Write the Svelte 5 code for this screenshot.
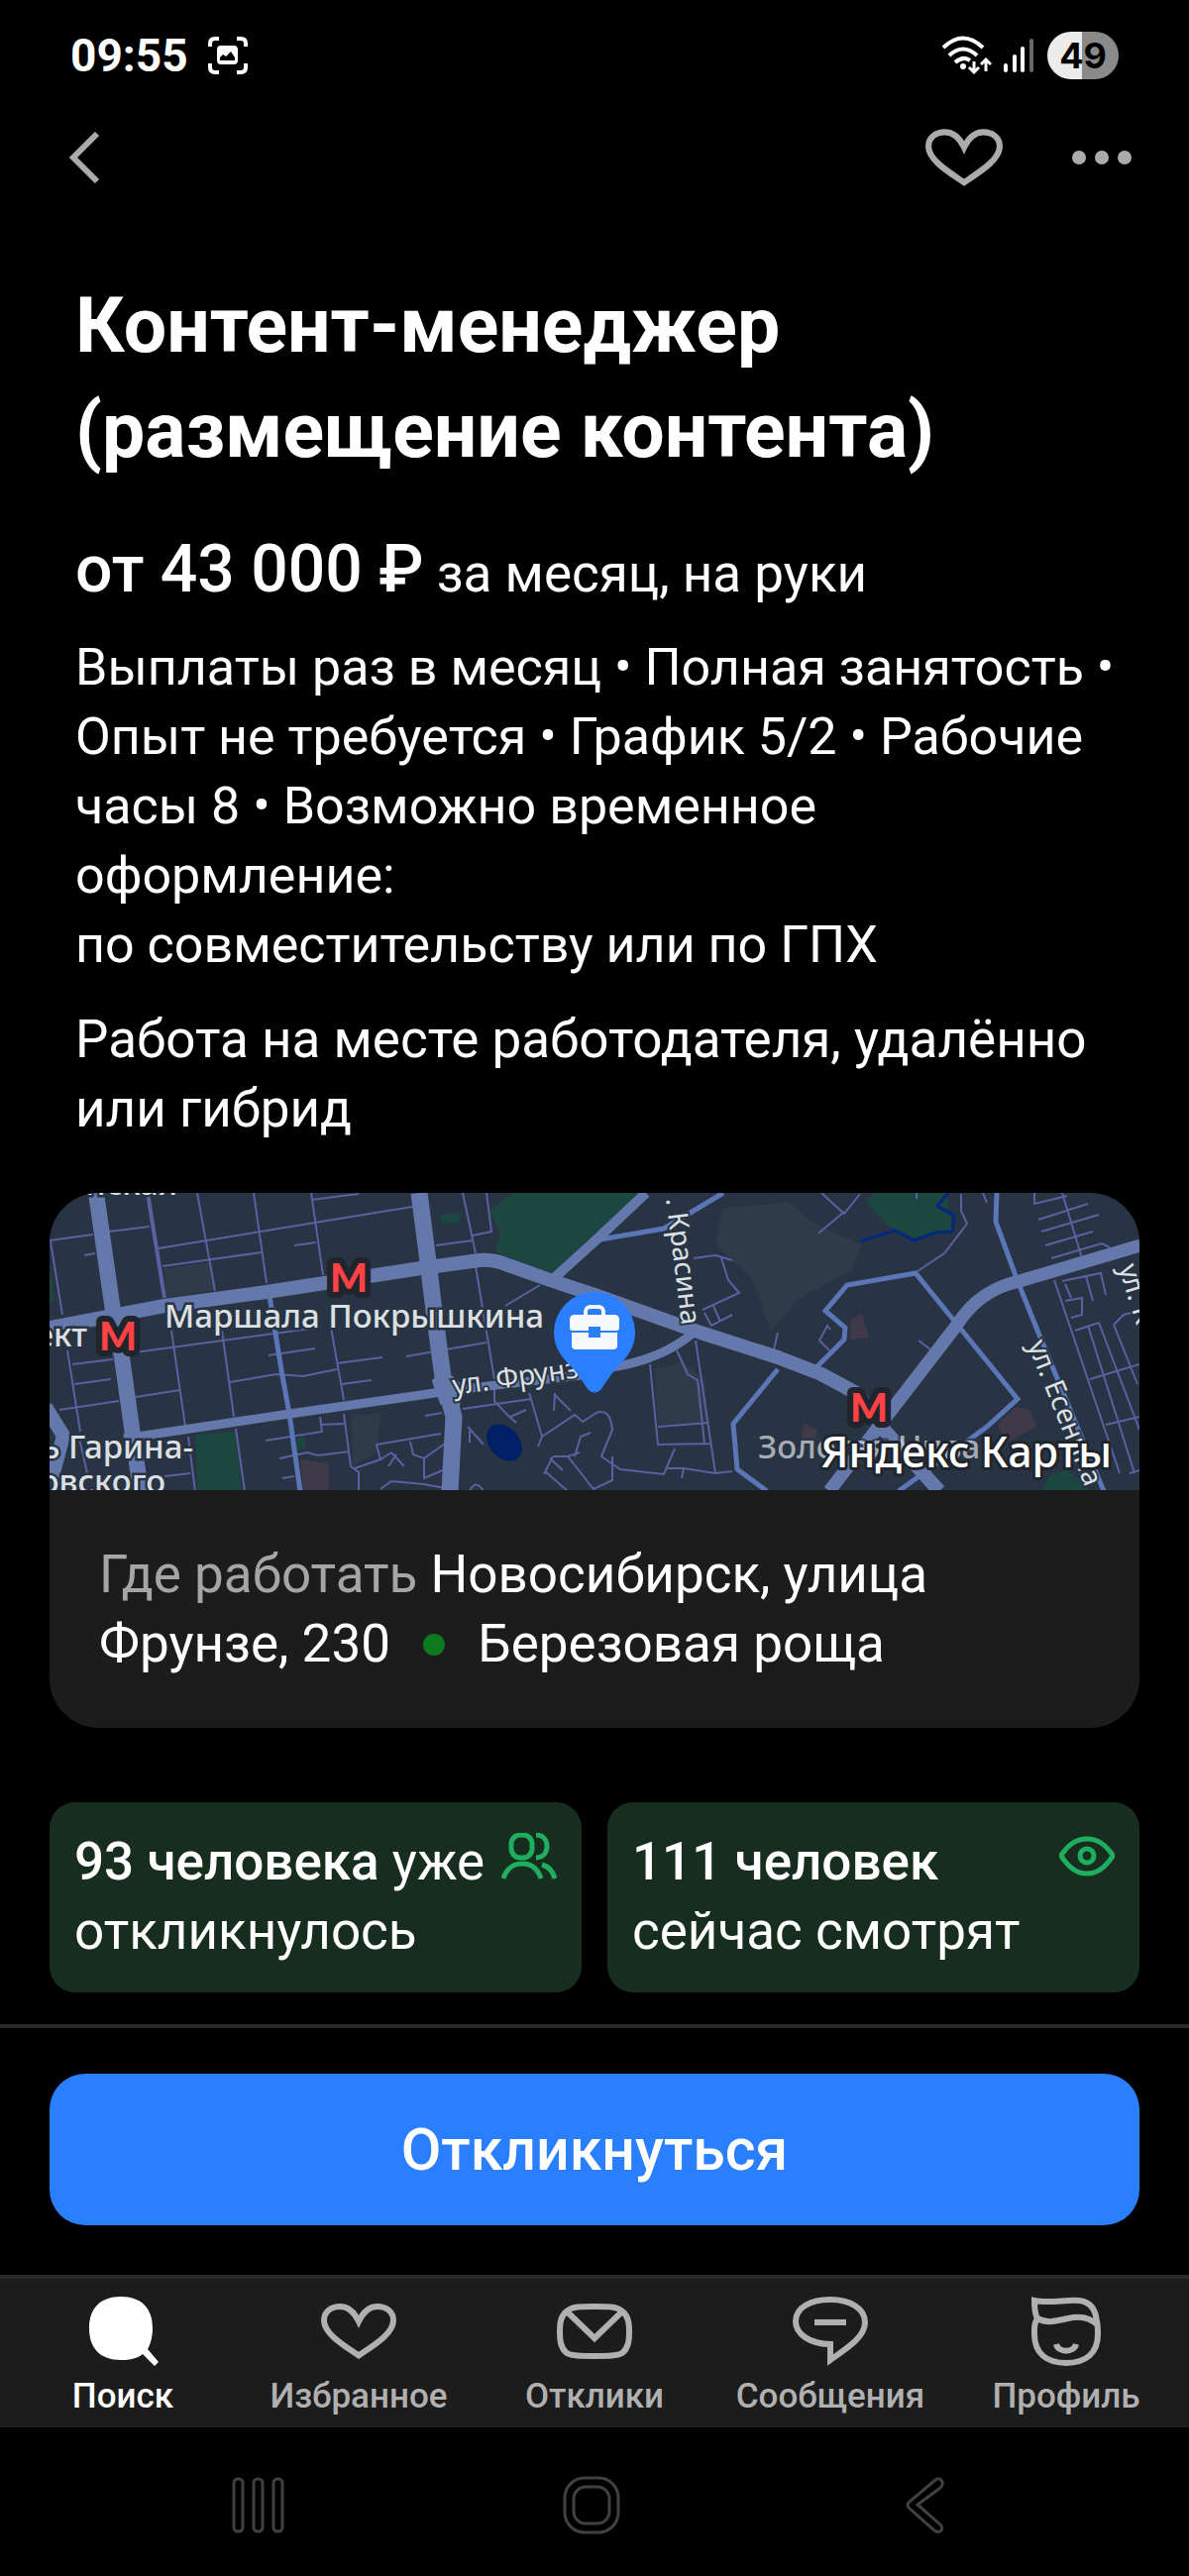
<script lang="ts">
	type Tab = { id: string; label: string };

	const tabs: Tab[] = [
		{ id: 'search', label: 'Поиск' },
		{ id: 'favorites', label: 'Избранное' },
		{ id: 'responses', label: 'Отклики' },
		{ id: 'messages', label: 'Сообщения' },
		{ id: 'profile', label: 'Профиль' }
	];

	const metro = [
		{ x: 302, y: 100 },
		{ x: 69, y: 159 },
		{ x: 827, y: 231 }
	];

	// minor streets, drawn as thin purple lines
	const lanes = [
		'M0 48L44 42M60 39L101 34M149 0L167 99M206 0L219 91M264 0L276 83M110 56L366 14M264 7L312 1',
		'M114 74L214 60M247 53L269 50M1 49L13 123M35 63L46 61M123 139L137 236M174 139L186 226',
		'M284 136L297 209M18 159L31 241M23 173L64 168M25 193L62 188M10 219L70 210M86 161L271 136',
		'M87 206L132 199M182 191L229 183L256 185L290 178M221 164L268 157M290 172L336 166',
		'M295 193L325 189M360 165L441 151M430 74L449 188M417 0L430 61M441 0L446 39L427 43',
		'M390 53L427 48M460 114L495 93M297 223L304 276L312 282V301M188 238L197 301',
		'M218 250L275 241L273 226M273 234L297 233M232 268L260 262L271 265L303 261M235 288L247 286',
		'M308 278L334 269L330 254L395 243M364 251L367 264L378 268L399 253M378 268V288L399 279',
		'M334 299L345 291L378 294L399 298M334 269L345 262M345 262L358 276M350 264L342 276',
		'M140 246L147 301M116 286L142 283M29 243L38 283M379 225L396 222M449 190V210L462 224L471 232M465 226L481 219',
		'M417 218L486 208L497 246L530 224L538 231L552 222Q566 217 568 239L557 266L576 279L620 284L631 258',
		'M510 202L509 220M509 203L526 220M486 208L484 202M497 246L493 256M422 236L438 254M424 240L424 252',
		'M508 266L523 266L549 299L568 290V266M508 266L499 284M500 281L523 301M530 266L536 246L546 242',
		'M523 266L535 262M505 268L518 280M424 301Q430 288 438 301',
		'M606 173L614 254L667 253M652 149L672 283L689 281M614 236L665 232M633 159L644 183L654 189L661 253',
		'M622 278L640 278L672 283M640 278L638 288M650 66L672 63L689 68M678 66L685 88L696 101L659 118',
		'M661 121L668 134L689 123M670 114L677 130M735 141L731 158M788 138L785 134L777 149L787 159M877 149L889 158',
		'M779 0L802 21L818 1M802 19L776 41M920 1V18L926 31L903 61L876 79M942 0L946 10M875 0V6',
		'M1014 88L1080 283M1022 0L1042 66M994 0V11L1027 3M998 27L1048 11M1001 39L1059 22M1005 53L1053 39',
		'M1011 66L1062 51L1070 55M1048 134L1095 283M1059 131L1100 239M1050 188L1100 173M1066 234L1100 226',
		'M1035 139L1059 131M1025 109L1042 106V123L1031 126M1022 89L1061 81L1066 103M1046 84L1053 109',
		'M1025 92L1031 106M1074 133L1098 193M1074 133L1084 123L1100 119M1090 283L1100 280'
	];

	let activeTab = $state('search');
	let liked = $state(false);
</script>

{#snippet heart(size: number)}
	<svg class="line" width={size} height={size} viewBox="0 0 76 76" aria-hidden="true">
		<path
			d="M38 62.500C21 51 3 40 3 27C3 18.500 10 13 19 13C27.500 13 33.500 18.500 38 28C42.500 18.500 48.500 13 57 13C66 13 73 18.500 73 27C73 40 55 51 38 62.500Z"
		/>
	</svg>
{/snippet}

<div class="screen">
	<div class="status">
		<span class="time">09:55</span>
		<svg width="40" height="40" viewBox="0 0 40 40" aria-hidden="true">
			<g fill="none" stroke="#fff" stroke-width="4">
				<path d="M2 11V8Q2 3 7 3H11M29 3H33Q38 3 38 8V11M38 28V32Q38 37 33 37H29M11 37H7Q2 37 2 32V28" />
			</g>
			<path
				fill="#fff"
				fill-rule="evenodd"
				d="M13 10H26Q30 10 30 14V25Q30 29 26 29H13Q9 29 9 25V14Q9 10 13 10ZM12 25H27V22L23 16L18 21L15 19L12 22Z"
			/>
		</svg>
		<div class="signals">
			<svg width="50" height="40" viewBox="0 0 50 40" aria-hidden="true">
				<g fill="none" stroke="#fff" stroke-width="4">
					<path d="M1 12Q21 -7 41 12M7 20Q21 7 35 20M13 27Q21 20 28 25" />
				</g>
				<circle cx="21" cy="31" r="3" fill="#fff" />
				<path
					d="M32 26V36M27 32L32 37L37 32M44 36V25M39 29L44 24L49 29"
					fill="none"
					stroke="#fff"
					stroke-width="3"
				/>
			</svg>
			<svg width="32" height="34" viewBox="0 0 32 34" aria-hidden="true">
				<path d="M2 32V27M11 32V18M19 32V10" stroke="#fff" stroke-width="4" stroke-linecap="round" />
				<path d="M28 32V2" stroke="#666" stroke-width="4" stroke-linecap="round" />
			</svg>
			<span class="battery">49</span>
		</div>
	</div>

	<header class="toolbar">
		<button class="icon-button" aria-label="Назад">
			<svg class="line" width="32" height="52" viewBox="0 0 32 52" aria-hidden="true">
				<path d="M28 2L4 26L28 50" />
			</svg>
		</button>
		<div class="actions">
			<button
				class="icon-button"
				aria-label="В избранное"
				aria-pressed={liked}
				onclick={() => (liked = !liked)}
			>
				{@render heart(78)}
			</button>
			<button class="icon-button" aria-label="Ещё">
				<svg width="60" height="16" viewBox="0 0 60 16" fill="currentColor" aria-hidden="true">
					<circle cx="7" cy="8" r="7" />
					<circle cx="30" cy="8" r="7" />
					<circle cx="53" cy="8" r="7" />
				</svg>
			</button>
		</div>
	</header>

	<main>
		<section class="summary">
			<h1>Контент-менеджер<br />(размещение контента)</h1>
			<p class="salary"><strong>от 43 000 ₽</strong> за месяц, на руки</p>
			<p class="terms">
				Выплаты раз в месяц • Полная занятость •<br />
				Опыт не требуется • График 5/2 • Рабочие<br />
				часы 8 • Возможно временное<br />
				оформление:<br />
				по совместительству или по ГПХ
			</p>
			<p>Работа на месте работодателя, удалённо<br />или гибрид</p>
		</section>

		<section class="place">
			<svg class="map" viewBox="0 0 1100 300" preserveAspectRatio="xMidYMid slice" role="img" aria-label="Карта">
				<rect width="1100" height="300" fill="#283444" />
				<path
					fill="#303b4a"
					d="M679 16L746 9L770 30L820 53L809 79L757 106L728 140L709 86L672 53ZM610 178L640 170L662 190L664 232L614 234ZM305 225L334 223L330 262L306 276ZM116 76L165 70L166 98L118 106Z"
				/>
				<path
					fill="#1c4741"
					d="M467 0H596L507 80L492 80L450 59L455 40L443 18ZM394 22L414 20V30L396 31ZM824 9L831 0H905L911 39L876 46L846 33ZM147 244L188 241L194 301H149ZM1001 301L1009 286L1027 279L1050 301ZM0 76L6 109L0 112ZM249 248L258 246V258L250 259Z"
				/>
				<path
					fill="#40394a"
					d="M957 233L975 216L990 219L996 236L964 253ZM809 128L820 122L827 146L808 148ZM253 269L282 273V301H256ZM762 232L775 240L774 248L758 250Z"
				/>
				<ellipse cx="459" cy="252" rx="21" ry="15" transform="rotate(48 459 252)" fill="#001f66" />
				<path class="river" d="M818 49L853 38L872 48L895 40L911 39L913 23L896 13L907 0" />
				{#each lanes as d (d)}
					<path class="lane" {d} />
				{/each}
				<path class="lane wide" d="M99 0L116 106" />
				<g class="street">
					<path d="M222 104L234 179L242 223L253 301M550 48L620 36L680 0" />
					<path d="M724 301L694 279L690 233L735 178M774 176L802 148L803 136L783 119L805 93L874 81L977 208L946 236L857 301" />
					<path d="M956 0L955 29L977 89L1000 146L1064 301" />
				</g>
				<g class="road">
					<path stroke-width="9" d="M75 248L242 223L382 203L408 199L545 183L568 176Q618 168 650 141" />
					<path stroke-width="14" d="M-4 216L14 245L2 290" />
					<path stroke-width="16" d="M47 0L64 119L73 166L92 301" />
					<path stroke-width="17" d="M373 0L382 69L388 119L397 186L408 226L404 301" />
					<path
						stroke-width="14"
						d="M0 136L116 114L219 100L375 76L434 68Q448 67 460 72L508 89L550 103L657 141L735 166L779 183L816 203L842 239L898 301"
					/>
					<path stroke-width="10" d="M602 0L550 49L508 87" />
					<path stroke-width="13" d="M787 301L839 233L916 133Q938 98 979 89L1101 53" />
					<path stroke-width="4" d="M388 190L400 182L416 196L412 214L396 212Z" />
				</g>

				<g class="names">
					<text x="116" y="136">Маршала Покрышкина</text>
					<text x="38" y="155" text-anchor="end">ект</text>
					<text x="145" y="268" text-anchor="end">ь Гарина-</text>
					<text x="117" y="303" text-anchor="end">овского</text>
					<text x="129" y="2" text-anchor="end">нская</text>
					<text x="715" y="268" opacity="0.700">Золотая Нива</text>
				</g>
				<g class="names small">
					<text transform="translate(408 204) rotate(-8)">ул. Фрунзе</text>
					<text transform="translate(638 134) rotate(83)" text-anchor="end">. Красина</text>
					<text transform="translate(987 153) rotate(68)">ул. Есенина</text>
					<text transform="translate(1079 75) rotate(73)">ул. К</text>
				</g>

				{#each metro as station (station.x)}
					<text class="metro" x={station.x} y={station.y} text-anchor="middle">М</text>
				{/each}
				<text class="brand" x="1072" y="277" text-anchor="end">Яндекс Карты</text>

				<path
					fill="#2a7fff"
					d="M550 100A41 41 0 0 1 591 141C591 158 580 169 572 177C566 184 562 190 557 198Q550 205 543 198C538 190 534 184 528 177C520 169 509 158 509 141A41 41 0 0 1 550 100Z"
				/>
				<rect x="541" y="115" width="18" height="14" rx="5" fill="none" stroke="#f7f9fd" stroke-width="4" />
				<path
					fill="#f7f9fd"
					d="M530 123H570Q575 123 575 128V136Q575 139 572 139H556V135H544V139H528Q525 139 525 136V128Q525 123 530 123ZM527 141H544V146H556V141H573V154Q573 158 569 158H531Q527 158 527 154Z"
				/>
			</svg>
			<p class="address">
				<span class="muted">Где работать</span> Новосибирск, улица<br />
				Фрунзе, 230 <span class="line-dot"></span> Березовая роща
			</p>
		</section>

		<section class="stats">
			<div class="stat">
				<p><strong>93 человека</strong> уже<br />откликнулось</p>
				<svg width="56" height="48" viewBox="0 0 56 48" aria-hidden="true">
					<rect x="10" y="2" width="21" height="23" rx="9" />
					<path
						d="M35 2C42 2 46 7 46 13.500C46 20 42 25 35 25M2 46C5 37 11 31 21 31C31 31 37 37 40 46M41 32C48 34 52 39 54 46"
					/>
				</svg>
			</div>
			<div class="stat">
				<p><strong>111 человек</strong><br />сейчас смотрят</p>
				<svg width="56" height="48" viewBox="0 0 56 48" aria-hidden="true">
					<path
						d="M3 24Q1 23 3 21C9 13 16 6 28 6C40 6 47 13 53 21Q55 23 53 25C47 33 40 41 28 41C16 41 9 33 3 25Z"
					/>
					<ellipse cx="28" cy="23" rx="7" ry="7" />
				</svg>
			</div>
		</section>
	</main>

	<div class="apply">
		<button class="apply-button">Откликнуться</button>
	</div>

	<nav class="tabs">
		{#each tabs as tab (tab.id)}
			<a
				class="tab"
				class:active={activeTab === tab.id}
				href="#{tab.id}"
				aria-current={activeTab === tab.id ? 'page' : undefined}
				onclick={() => (activeTab = tab.id)}
			>
				{#if tab.id === 'favorites'}
					{@render heart(76)}
				{:else}
					<svg class="line" width="76" height="76" viewBox="0 0 76 76" aria-hidden="true">
						{#if tab.id === 'search'}
							<path
								fill="currentColor"
								stroke="none"
								d="M36 3C57 3 68 15 68 35C68 43 66 51 63 56L74 69L70 73L58 61C53 65 46 67 36 67C15 67 4 55 4 35C4 15 15 3 36 3Z"
							/>
						{:else if tab.id === 'responses'}
							<path
								d="M38 13C52 13 60 13 65 17C72 22 73 29 73 38C73 48 72 55 66 60C61 63 52 63 38 63C24 63 15 63 10 60C4 55 3 48 3 38C3 29 4 22 11 17C16 13 24 13 38 13Z"
							/>
							<path d="M9 17L38 45L67 17" />
						{:else if tab.id === 'messages'}
							<path d="M38 51C18 51 3 41 3 28C3 14 18 6 38 6C58 6 73 15 73 29C73 43 58 53 38 67ZM22 29H54" />
						{:else}
							<path
								d="M9 25C6 20 6 14 6 7C20 10 38 6 51 7C63 8 68 16 69 29M9 25C20 31 29 27 40 25C53 22 63 25 70 32M9 25C5 31 6 36 6 41C6 60 18 70 38 70C58 70 70 60 70 41C70 36 70 32 69 28M28 51C30 60 46 60 48 51"
							/>
						{/if}
					</svg>
				{/if}
				{tab.label}
			</a>
		{/each}
	</nav>

	<div class="system">
		<button aria-label="Недавние приложения">
			<svg width="54" height="60" viewBox="0 0 54 60" aria-hidden="true">
				<rect x="2" y="3" width="9" height="53" rx="4" />
				<rect x="22" y="3" width="9" height="53" rx="4" />
				<rect x="42" y="3" width="9" height="53" rx="4" />
			</svg>
		</button>
		<button aria-label="Главный экран">
			<svg width="60" height="60" viewBox="0 0 60 60" aria-hidden="true">
				<rect x="3" y="2" width="54" height="55" rx="20" />
				<rect x="12" y="11" width="36" height="37" rx="12" />
			</svg>
		</button>
		<button aria-label="Назад">
			<svg width="40" height="60" viewBox="0 0 40 60" aria-hidden="true">
				<path d="M31 4Q36 1 38 6Q39 9 36 12L13 29L36 49Q39 52 37 55Q34 58 30 55L5 33Q1 29 5 26Z" />
			</svg>
		</button>
	</div>
</div>

<style>
	:global(body) {
		margin: 0;
		background: #000;
	}

	.screen {
		display: flex;
		flex-direction: column;
		background: #000;
		color: #fff;
		font-family: Roboto, 'Liberation Sans', sans-serif;
		font-size: 53px;
		line-height: 70px;
	}

	h1,
	p {
		margin: 0;
		white-space: nowrap;
	}

	button {
		padding: 0;
		border: none;
		background: none;
		color: inherit;
		font: inherit;
		cursor: pointer;
	}

	svg {
		display: block;
		flex: none;
	}

	.line {
		fill: none;
		stroke: currentColor;
		stroke-width: 6;
	}

	.status {
		display: flex;
		align-items: center;
		gap: 20px;
		height: 112px;
		padding: 0 71px;
	}

	.time {
		font-size: 46px;
		font-weight: 700;
	}

	.signals {
		display: flex;
		align-items: center;
		gap: 12px;
		margin-left: auto;
	}

	.battery {
		width: 72px;
		height: 48px;
		border-radius: 24px;
		background: linear-gradient(90deg, #ececec 48%, #8a8a8a 48%);
		color: #000;
		font-family: Inter, sans-serif;
		font-size: 36px;
		font-weight: 700;
		line-height: 48px;
		text-align: center;
	}

	.toolbar {
		display: flex;
		align-items: center;
		justify-content: space-between;
		height: 94px;
		padding: 0 58px 0 70px;
		color: #ababab;
	}

	.actions {
		display: flex;
		align-items: center;
		gap: 70px;
	}

	.summary {
		display: flex;
		flex-direction: column;
		gap: 25px;
		padding: 70px 50px 50px 76px;
	}

	h1 {
		font-size: 77px;
		font-weight: 700;
		line-height: 106px;
	}

	.salary {
		margin-top: 27px;
	}

	.salary strong {
		font-size: 66px;
		font-weight: 500;
	}

	.terms {
		font-size: 52px;
	}

	.place {
		margin: 0 50px;
		overflow: hidden;
		border-radius: 50px;
		background: #1c1c1c;
	}

	.map {
		width: 100%;
		height: 300px;
	}

	.lane {
		fill: none;
		stroke: #5a60a0;
		stroke-width: 2;
	}

	.lane.wide {
		stroke-width: 4;
	}

	.street {
		fill: none;
		stroke: #5b76b6;
		stroke-width: 5;
	}

	.road {
		fill: none;
		stroke: #6478ac;
		stroke-linejoin: round;
	}

	.river {
		fill: none;
		stroke: #00297f;
		stroke-width: 3;
	}

	.names {
		fill: #dde0e2;
		stroke: #283444;
		stroke-width: 5;
		paint-order: stroke;
		font-family: 'Noto Sans', sans-serif;
		font-size: 33px;
		font-weight: 500;
	}

	.names.small {
		stroke-width: 4;
		font-size: 28px;
		font-weight: 400;
	}

	.metro {
		fill: #ff4245;
		stroke: #20242c;
		stroke-width: 12;
		stroke-linejoin: round;
		paint-order: stroke;
		font-family: Lato, sans-serif;
		font-size: 40px;
		font-weight: 900;
	}

	.brand {
		fill: #fff;
		stroke: #20242c;
		stroke-width: 6;
		stroke-linejoin: round;
		paint-order: stroke;
		font-family: 'Noto Sans', sans-serif;
		font-size: 43px;
		font-weight: 500;
	}

	.address {
		padding: 50px;
	}

	.muted {
		color: #a5a5a5;
	}

	.line-dot {
		display: inline-block;
		width: 22px;
		height: 22px;
		margin: 0 20px 6px;
		border-radius: 50%;
		background: #0c7a1d;
	}

	.stats {
		display: grid;
		grid-template-columns: 1fr 1fr;
		gap: 26px;
		padding: 75px 50px 32px;
	}

	.stat {
		display: flex;
		justify-content: space-between;
		padding: 25px 25px 27px;
		border-radius: 26px;
		background: #172e1f;
	}

	.stat p {
		width: 0;
	}

	.stat strong {
		font-weight: 500;
	}

	.stat svg {
		margin-top: 6px;
		fill: none;
		stroke: #1fae60;
		stroke-width: 5;
	}

	.apply {
		padding: 46px 50px 50px;
		border-top: 4px solid #2b2b2b;
	}

	.apply-button {
		display: block;
		width: 100%;
		height: 153px;
		border-radius: 36px;
		background: #2a7fff;
		font-size: 59px;
		font-weight: 500;
	}

	.tabs {
		display: grid;
		grid-template-columns: repeat(5, 1fr);
		padding: 15px 5px 10px;
		border-top: 4px solid #2b2b2b;
		background: #1c1c1c;
	}

	.tab {
		display: flex;
		flex-direction: column;
		align-items: center;
		gap: 6px;
		color: #b0b0b0;
		font-size: 35px;
		font-weight: 500;
		line-height: 43px;
		text-decoration: none;
	}

	.tab.active {
		color: #fff;
	}

	.system {
		display: grid;
		grid-template-columns: repeat(3, 1fr);
		align-items: center;
		justify-items: center;
		height: 150px;
		padding: 0 99px 0 93px;
	}

	.system svg {
		margin-top: 8px;
		fill: none;
		stroke: #404040;
		stroke-width: 3;
	}
</style>
